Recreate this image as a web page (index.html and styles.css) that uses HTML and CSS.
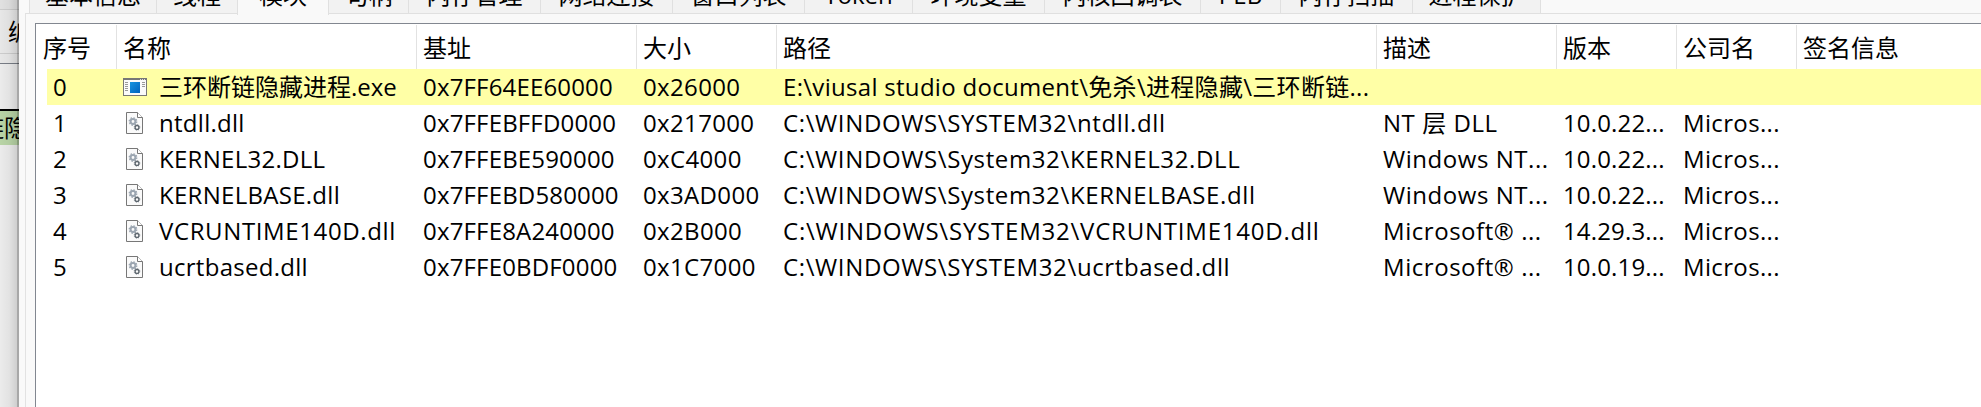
FILE: index.html
```html
<!DOCTYPE html>
<html lang="zh-CN">
<head>
<meta charset="utf-8">
<title>模块</title>
<link rel="stylesheet" href="styles.css">
</head>
<body>
<svg width="0" height="0" class="defs">
  <symbol id="dll" viewBox="0 0 24 24">
    <path d="M3.5 1.5H14.5L19.5 6.5V22.5H3.5Z" fill="#fafafa" stroke="#777"/>
    <path d="M14.5 1.5V6.5H19.5" fill="#fff" stroke="#777"/>
    <circle cx="10" cy="10.5" r="2.4" fill="none" stroke="#9ba5b0" stroke-width="2"/>
    <circle cx="10" cy="10.5" r="3.8" fill="none" stroke="#9ba5b0" stroke-width="1.2" stroke-dasharray="1.5 1.48"/>
    <circle cx="14" cy="16.4" r="1.9" fill="none" stroke="#5d666e" stroke-width="1.3"/>
    <circle cx="14" cy="16.4" r="2.8" fill="none" stroke="#5d666e" stroke-width=".8" stroke-dasharray="1.1 1.1"/>
  </symbol>
  <symbol id="exe" viewBox="0 0 24 24">
    <rect x=".5" y="3.5" width="23" height="17" fill="#fafafa" stroke="#777"/>
    <path d="M0 4H24" stroke="#777" stroke-width="2"/>
    <path d="M17 4.5h1M19 4.5h1M21 4.5h1" stroke="#ddd"/>
    <rect x="7" y="7" width="10" height="11" fill="url(#blue)"/>
    <path d="M2 7.5h3M2 9.5h3M2 11.5h3M2 13.5h3M2 15.5h3M19 7.5h3M19 9.5h3M19 11.5h3" stroke="#999"/>
  </symbol>
  <linearGradient id="blue" x1="0" y1="0" x2="1" y2="1"><stop stop-color="#1694e0"/><stop offset="1" stop-color="#0062be"/></linearGradient>
</svg>
<div class="desktop">
  <aside class="behind">
    <div class="behind-top"></div>
    <div class="behind-head">编</div>
    <div class="behind-gap"></div>
    <div class="behind-body"></div>
    <div class="behind-row"><span>链隐</span></div>
    <div class="shadow"></div>
  </aside>
  <main class="window">
    <nav class="tabs">
      <div class="tab t127">基本信息</div><div class="tab t81">线程</div><div class="tab t91 active">模块</div><div class="tab t80">句柄</div><div class="tab t132">内存管理</div><div class="tab t132">网络连接</div><div class="tab t132">窗口列表</div><div class="tab t108">Token</div><div class="tab t132">环境变量</div><div class="tab t156">内核回调表</div><div class="tab t80">PEB</div><div class="tab t132">内存扫描</div><div class="tab t128">进程保护</div>
    </nav>
    <section class="page">
      <div class="list">
        <div class="row head"><div>序号</div><div>名称</div><div>基址</div><div>大小</div><div>路径</div><div>描述</div><div>版本</div><div>公司名</div><div>签名信息</div></div>
        <div class="row marked"><div>0</div><div><svg class="icon"><use href="#exe"/></svg>三环断链隐藏进程.exe</div><div>0x7FF64EE60000</div><div>0x26000</div><div class="mixed">E:\viusal studio document\免杀\进程隐藏\三环断链...</div><div></div><div></div><div></div><div></div></div>
        <div class="row"><div>1</div><div class="name"><svg class="icon"><use href="#dll"/></svg>ntdll.dll</div><div>0x7FFEBFFD0000</div><div>0x217000</div><div class="path">C:\WINDOWS\SYSTEM32\ntdll.dll</div><div>NT 层 DLL</div><div>10.0.22...</div><div>Micros...</div><div></div></div>
        <div class="row"><div>2</div><div class="name"><svg class="icon"><use href="#dll"/></svg>KERNEL32.DLL</div><div>0x7FFEBE590000</div><div>0xC4000</div><div class="path">C:\WINDOWS\System32\KERNEL32.DLL</div><div>Windows NT...</div><div>10.0.22...</div><div>Micros...</div><div></div></div>
        <div class="row"><div>3</div><div class="name"><svg class="icon"><use href="#dll"/></svg>KERNELBASE.dll</div><div>0x7FFEBD580000</div><div>0x3AD000</div><div class="path">C:\WINDOWS\System32\KERNELBASE.dll</div><div>Windows NT...</div><div>10.0.22...</div><div>Micros...</div><div></div></div>
        <div class="row"><div>4</div><div class="name wide"><svg class="icon"><use href="#dll"/></svg>VCRUNTIME140D.dll</div><div>0x7FFE8A240000</div><div>0x2B000</div><div class="path wide">C:\WINDOWS\SYSTEM32\VCRUNTIME140D.dll</div><div>Microsoft® ...</div><div>14.29.3...</div><div>Micros...</div><div></div></div>
        <div class="row"><div>5</div><div class="name"><svg class="icon"><use href="#dll"/></svg>ucrtbased.dll</div><div>0x7FFE0BDF0000</div><div>0x1C7000</div><div class="path">C:\WINDOWS\SYSTEM32\ucrtbased.dll</div><div>Microsoft® ...</div><div>10.0.19...</div><div>Micros...</div><div></div></div>
      </div>
    </section>
  </main>
</div>
</body>
</html>
```
FILE: styles.css
```css
* { box-sizing: border-box; }
body { margin: 0; overflow: hidden; color: #000; font: 24px/36px "Open Sans", "Noto Sans CJK SC", sans-serif; }
.defs { position: absolute; }
.desktop { display: flex; width: 1981px; height: 407px; overflow: hidden; }
.behind { position: relative; width: 19px; flex: none; overflow: hidden; background: #fff; white-space: nowrap; }
.behind-top { height: 10px; background: #f4f4f4; border-bottom: 1px solid #dedede; }
.behind-head { height: 44px; padding: 4px 0 0 8px; background: #fbfbfb; border-bottom: 1px solid #dedede; }
.behind-gap { height: 10px; background: #fbfbfb; border-bottom: 1px solid #828790; }
.behind-body { height: 47px; border-bottom: 2px solid #000; }
.behind-row { height: 34px; display: flex; justify-content: flex-end; align-items: center; background: #c8e6b4; }
.behind-row span { margin-right: -9px; }
.shadow { position: absolute; inset: 0; background: linear-gradient(90deg, rgba(0,0,0,.08), rgba(0,0,0,.11) 9px, rgba(0,0,0,.19) 17px, rgba(0,0,0,.34) 17px, rgba(0,0,0,.34) 18.5px, rgba(0,0,0,.2) 19px); }
.window { flex: 1; min-width: 0; background: #f9f9f9; display: flex; flex-direction: column; }
.tabs { display: flex; height: 13px; flex: none; padding-left: 10px; }
.tab { flex: none; height: 13px; display: flex; justify-content: center; align-items: flex-end; background: #f2f2f2; border-right: 1px solid #e0e0e0; white-space: nowrap; }
.tab:first-child { border-left: 1px solid #e0e0e0; }
.active { height: 15px; z-index: 1; padding-bottom: 2px; background: #f9f9f9; box-shadow: -1px 0 #e0e0e0; }
.t80 { width: 80px; } .t81 { width: 81px; } .t91 { width: 91px; } .t108 { width: 108px; }
.t127 { width: 128px; } .t128 { width: 128px; } .t132 { width: 132px; } .t156 { width: 156px; }
.page { flex: 1; margin-left: 6px; border-left: 1px solid #e2e2e2; border-top: 1px solid #e0e0e0; padding: 9px 0 0 9px; }
.list { height: 100%; background: #fff; border-left: 1px solid #828790; border-top: 1px solid #828790; }
.row { display: grid; height: 36px; grid-template-columns: 81px 300px 220px 140px 600px 180px 120px 120px 1fr; white-space: nowrap; }
.row > div { padding-left: 6px; display: flex; align-items: center; }
.row > div:first-child { padding-left: 17px; }
.row > div:nth-child(3) { letter-spacing: .17px; }
.row > div:nth-child(4) { letter-spacing: .35px; }
.row > div:nth-child(6) { letter-spacing: .55px; }
.row > div:nth-child(7) { letter-spacing: .15px; }
.row > div:nth-child(8) { letter-spacing: .35px; }
.row .name { letter-spacing: .28px; }
.row .name.wide { letter-spacing: .62px; }
.row .path { letter-spacing: .62px; }
.row .path.wide { letter-spacing: .78px; }
.row .mixed { letter-spacing: .3px; }
.head { height: 45px; padding-top: 1px; }
.row.head > div { padding-top: 1px; border-right: 1px solid #e2e2e2; letter-spacing: 0; }
.row.head > div:first-child { padding-left: 7px; }
.row.head > div:last-child { border: 0; }
.marked { background: linear-gradient(90deg, #fff 11px, #ffffa6 11px); }
.icon { width: 24px; height: 24px; flex: none; margin-right: 12px; }
```
